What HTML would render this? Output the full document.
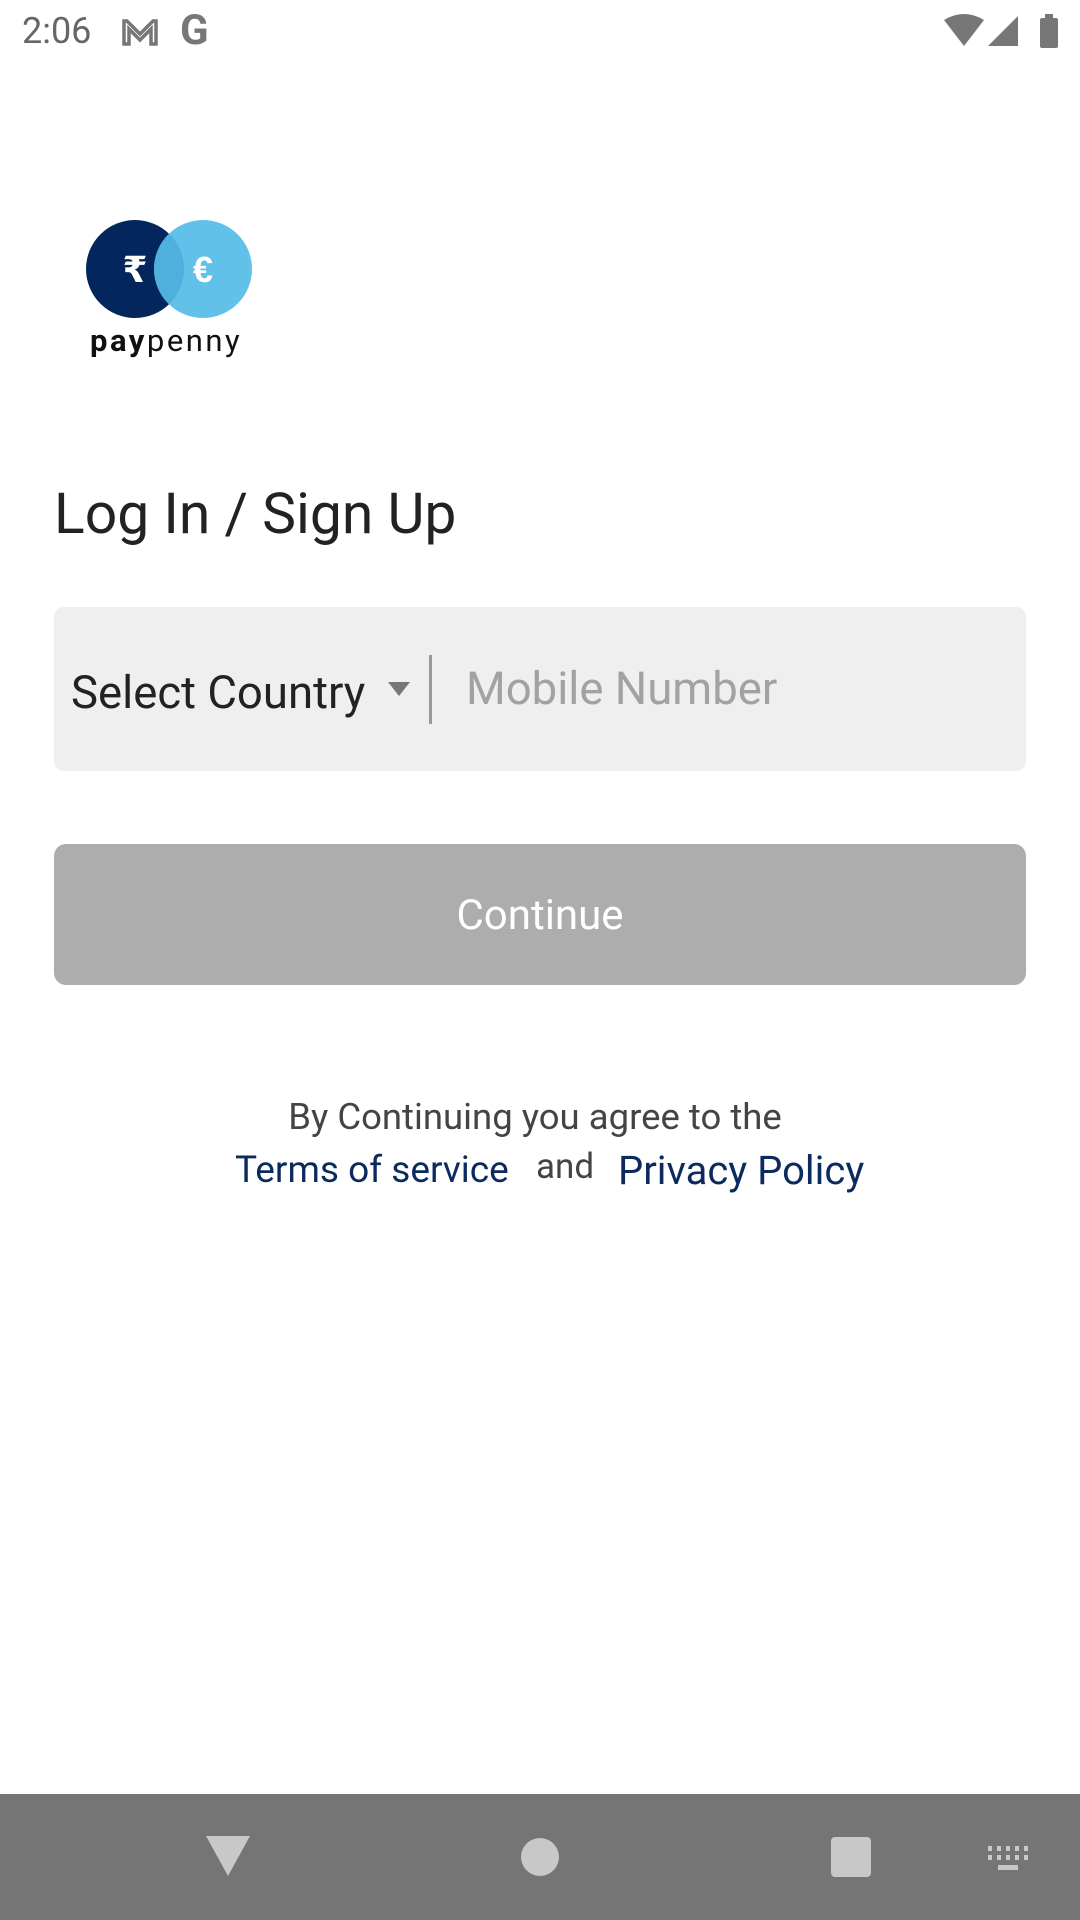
<!DOCTYPE html>
<html><head><meta charset="utf-8"><style>
*{margin:0;padding:0;box-sizing:border-box}
body{width:1080px;height:1920px;background:#fff;position:relative;overflow:hidden;font-family:"Roboto","Liberation Sans",sans-serif}
.a{position:absolute;white-space:nowrap}
</style></head><body>
<div class="a" style="left:22px;top:10px;font-size:36px;color:#666">2:06</div>
<svg class="a" style="left:120px;top:16px" width="40" height="32" viewBox="0 0 40 32"><path d="M4 28V5h3l13 13L33 5h3v23h-5V13L20 24 9 13v15z" fill="none" stroke="#777" stroke-width="3.5"/></svg>
<div class="a" style="left:180px;top:6px;font-size:42px;font-weight:bold;color:#777">G</div>
<svg class="a" style="left:944px;top:14px" width="120" height="34" viewBox="0 0 120 34"><path d="M0 6Q20-6 40 6L20 32z" fill="#777"/><path d="M44 32L74 2v30z" fill="#777"/><rect x="96" y="4" width="18" height="30" rx="2" fill="#777"/><rect x="101" y="0" width="8" height="5" fill="#777"/></svg>
<svg class="a" style="left:85px;top:220px" width="170" height="100" viewBox="0 0 170 100"><defs><clipPath id="c"><circle cx="50" cy="49" r="49"/></clipPath></defs><circle cx="50" cy="49" r="49" fill="#03265c"/><circle cx="118" cy="49" r="49" fill="#62c1e9"/><circle cx="118" cy="49" r="49" fill="#4fb0de" clip-path="url(#c)"/><text x="50" y="62" font-size="36" font-weight="bold" fill="#fff" text-anchor="middle" font-family="Liberation Sans,DejaVu Sans,sans-serif">₹</text><text x="118" y="62" font-size="36" font-weight="bold" fill="#fff" text-anchor="middle" font-family="Liberation Sans,sans-serif">€</text></svg>
<div class="a" style="left:90px;top:322px;font-size:31px;color:#111;letter-spacing:2.5px"><b>pay</b>penny</div>
<div class="a" style="left:54px;top:480px;font-size:57px;color:#222">Log In / Sign Up</div>
<div class="a" style="left:54px;top:607px;width:972px;height:164px;background:#efefef;border-radius:10px"></div>
<div class="a" style="left:71px;top:667px;font-size:45.5px;color:#222">Select Country</div>
<svg class="a" style="left:388px;top:682px" width="22" height="14"><path d="M0 0h22L11 14z" fill="#777"/></svg>
<div class="a" style="left:429px;top:655px;width:3px;height:69px;background:#999"></div>
<div class="a" style="left:466px;top:663px;font-size:45.5px;color:#a2a2a2">Mobile Number</div>
<div class="a" style="left:54px;top:844px;width:972px;height:141px;background:#adadad;border-radius:12px;color:#fff;font-size:42px;text-align:center;line-height:144px">Continue</div>
<div class="a" style="left:0;width:1070px;top:1095px;text-align:center;font-size:36.5px;color:#444">By Continuing you agree to the</div>
<div class="a" style="left:235px;top:1149px;font-size:37px;color:#0b2a5e">Terms of service</div>
<div class="a" style="left:536px;top:1146px;font-size:35px;color:#444">and</div>
<div class="a" style="left:618px;top:1147px;font-size:40px;color:#0b2a5e">Privacy Policy</div>
<div class="a" style="left:0;top:1794px;width:1080px;height:126px;background:#757575"></div>
<svg class="a" style="left:206px;top:1836px" width="44" height="40"><path d="M0 0h44L22 40z" fill="#c8c8c8"/></svg>
<div class="a" style="left:521px;top:1838px;width:38px;height:38px;border-radius:50%;background:#c8c8c8"></div>
<div class="a" style="left:831px;top:1837px;width:40px;height:40px;border-radius:4px;background:#c8c8c8"></div>
<svg class="a" style="left:988px;top:1846px" width="40" height="26"><g fill="#c8c8c8"><rect x="0" y="0" width="4" height="5"/><rect x="9" y="0" width="4" height="5"/><rect x="18" y="0" width="4" height="5"/><rect x="27" y="0" width="4" height="5"/><rect x="36" y="0" width="4" height="5"/><rect x="0" y="9" width="4" height="5"/><rect x="9" y="9" width="4" height="5"/><rect x="18" y="9" width="4" height="5"/><rect x="27" y="9" width="4" height="5"/><rect x="36" y="9" width="4" height="5"/><rect x="10" y="19" width="20" height="5"/></g></svg>
</body></html>
